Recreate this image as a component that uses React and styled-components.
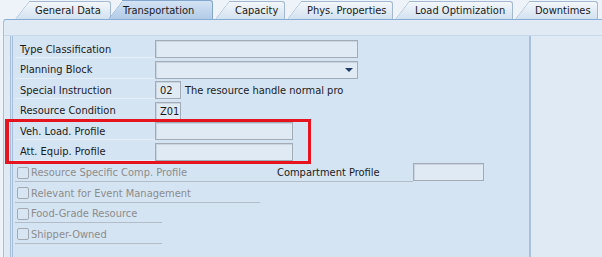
import React from 'react';
import styled, { createGlobalStyle } from 'styled-components';

const Global = createGlobalStyle`
  * { box-sizing: border-box; }
  html, body { margin: 0; padding: 0; }
  body {
    background: #eef3f9;
    font-family: "DejaVu Sans Condensed", "DejaVu Sans", "Liberation Sans", sans-serif;
    font-stretch: condensed;
    font-size: 11px;
    color: #1b1b1b;
  }
`;

const Screen = styled.div`
  width: 602px;
  height: 257px;
  overflow: hidden;
  display: flex;
  flex-direction: column;
`;

// tab strip on top
const TabStrip = styled.div`
  display: flex;
  align-items: flex-end;
  height: 19px;
  padding-left: 15px;
  gap: 2px;
`;

const Tab = styled.div`
  position: relative;
  z-index: ${p => (p.$active ? 2 : 1)};
  width: ${p => p.$w}px;
  height: ${p => (p.$active ? 19 : 18)}px;
  margin-left: ${p => (p.$active ? -5 : 0)}px;
  padding: 1px 0 0 ${p => (p.$active ? 15 : 20)}px;
  display: flex;
  align-items: center;
  white-space: nowrap;
  color: #1a1a1a;

  &::before,
  &::after {
    content: '';
    position: absolute;
    top: 0;
    bottom: 0;
    z-index: -1;
    background: ${p =>
      p.$active
        ? 'linear-gradient(#d3e3f4, #b2cbe7)'
        : 'linear-gradient(#f3f7fb, #d3e1f0)'};
    border-top: 1px solid ${p => (p.$active ? '#84a6cd' : '#a3b9d3')};
  }
  &::before {
    left: 0;
    width: 26px;
    transform-origin: bottom left;
    transform: skewX(-38deg);
    border-left: 1px solid ${p => (p.$active ? '#84a6cd' : '#a3b9d3')};
    border-top-left-radius: 2px;
  }
  &::after {
    left: 14px;
    right: 0;
    border-right: 1px solid ${p => (p.$active ? '#84a6cd' : '#a3b9d3')};
    border-top-right-radius: 3px;
  }
`;

const TabBody = styled.div`
  flex: 1;
  margin-left: 3px;
  display: flex;
  flex-direction: column;
  background: #dfeaf5;
  border-top: 1px solid #8aadd5;
  border-left: 1px solid #a6bfdb;
  border-top-left-radius: 3px;
`;

const TopBand = styled.div`
  height: 16px;
  border-bottom: 1px solid #c9d8e9;
`;

const Workspace = styled.div`
  flex: 1;
  display: flex;
`;

const Panel = styled.div`
  width: 521px;
  margin-left: 6px;
  padding: 4px 0 0 2px;
  display: flex;
  flex-direction: column;
  background: #d5e4f3;
  border-left: 3px double #a7bedb;
  border-right: 2px solid #a7c0dc;
`;

const Row = styled.div`
  display: flex;
  align-items: flex-start;
  height: 20.5px;
  flex: none;
`;

const Label = styled.div`
  width: ${p => p.$w || 140}px;
  height: 18px;
  padding: 1px 0 0 5px;
  display: flex;
  align-items: center;
  white-space: nowrap;
  border-bottom: 1px solid #e6eef8;
`;

const Field = styled.div`
  position: relative;
  width: ${p => p.$w}px;
  height: 18px;
  padding: 1px 0 0 4px;
  display: flex;
  align-items: center;
  background: #e0eaf5;
  border: 1px solid #a2acb7;
  box-shadow: inset 1px 1px 0 #c9d4e0;
`;

const Arrow = styled.span`
  position: absolute;
  right: 4px;
  top: 6px;
  width: 0;
  height: 0;
  border-left: 4px solid transparent;
  border-right: 4px solid transparent;
  border-top: 4px solid #213b66;
`;

const Hint = styled.span`
  margin-left: 4px;
  padding-top: 1px;
  line-height: 18px;
  white-space: nowrap;
`;

const Highlight = styled.div`
  position: relative;
  display: flex;
  flex-direction: column;

  &::after {
    content: '';
    position: absolute;
    left: -10px;
    top: -3px;
    width: 299px;
    bottom: -1px;
    border: 3px solid #e6141e;
    border-left-width: 4px;
  }
`;

const CheckCell = styled.div`
  width: ${p => p.$w}px;
  height: 19px;
  padding: 1px 0 0 2px;
  display: flex;
  align-items: center;
  gap: 2px;
  color: #8c8c8c;
  white-space: nowrap;
  border-bottom: 1px solid #b4bdc7;
`;

const Box = styled.span`
  width: 12px;
  height: 12px;
  flex: none;
  border: 1px solid #a3a9b0;
  border-radius: 2px;
  background: #d8e6f4;
`;

const SideLabel = styled(CheckCell)`
  color: #1b1b1b;
  padding-left: 5px;
`;

const RightArea = styled.div`
  flex: 1;
  background: #dfeaf5;
`;

const tabs = [
  { name: 'General Data', w: 96 },
  { name: 'Transportation', w: 105, active: true },
  { name: 'Capacity', w: 70 },
  { name: 'Phys. Properties', w: 106 },
  { name: 'Load Optimization', w: 118 },
  { name: 'Downtimes', w: 83 },
];

const Check = ({ w, children }) => (
  <CheckCell $w={w}>
    <Box />
    {children}
  </CheckCell>
);

export default function App() {
  return (
    <Screen>
      <Global />
      <TabStrip>
        {tabs.map(t => (
          <Tab key={t.name} $w={t.w} $active={t.active}>
            {t.name}
          </Tab>
        ))}
      </TabStrip>
      <TabBody>
        <TopBand />
        <Workspace>
          <Panel>
            <Row>
              <Label>Type Classification</Label>
              <Field $w={203} />
            </Row>
            <Row>
              <Label>Planning Block</Label>
              <Field $w={203}>
                <Arrow />
              </Field>
            </Row>
            <Row>
              <Label>Special Instruction</Label>
              <Field $w={26}>02</Field>
              <Hint>The resource handle normal pro</Hint>
            </Row>
            <Row>
              <Label>Resource Condition</Label>
              <Field $w={26}>Z01</Field>
            </Row>
            <Highlight>
              <Row>
                <Label>Veh. Load. Profile</Label>
                <Field $w={138} />
              </Row>
              <Row>
                <Label>Att. Equip. Profile</Label>
                <Field $w={138} />
              </Row>
            </Highlight>
            <Row>
              <Check w={257}>Resource Specific Comp. Profile</Check>
              <SideLabel $w={141}>Compartment Profile</SideLabel>
              <Field $w={71} />
            </Row>
            <Row>
              <Check w={245}>Relevant for Event Management</Check>
            </Row>
            <Row>
              <Check w={147}>Food-Grade Resource</Check>
            </Row>
            <Row>
              <Check w={147}>Shipper-Owned</Check>
            </Row>
          </Panel>
          <RightArea />
        </Workspace>
      </TabBody>
    </Screen>
  );
}
